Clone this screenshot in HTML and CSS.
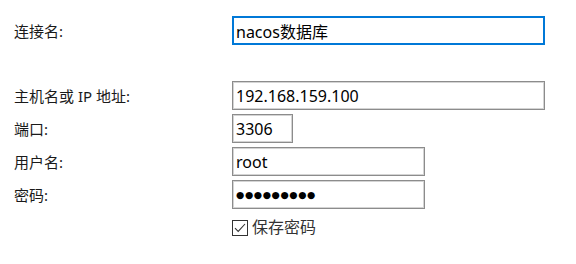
FILE: index.html
```html
<!doctype html>
<html>
<head>
  <meta charset="utf-8">
  <title>连接</title>
  <link rel="stylesheet" href="styles.css">
</head>
<body>

  <form class="conn">
    <label class="name first">连接名:</label>
    <div class="field first"><input type="text" class="wide focus" value="nacos数据库"></div>

    <label class="name">主机名或 IP 地址:</label>
    <div class="field"><input type="text" class="wide" value="192.168.159.100"></div>

    <label class="name">端口:</label>
    <div class="field"><input type="text" class="port" value="3306"></div>

    <label class="name">用户名:</label>
    <div class="field"><input type="text" class="mid" value="root"></div>

    <label class="name">密码:</label>
    <div class="field"><input type="text" class="mid secret" value="●●●●●●●●●"></div>

    <div></div>
    <label class="save">
      <span class="box">
        <svg width="14" height="14" viewBox="0 0 14 14"><path d="M2 7.2 L5.2 10.4 L12 3" fill="none" stroke="#333" stroke-width="1.1"/></svg>
      </span>
      保存密码
    </label>
  </form>

</body>
</html>
```

FILE: styles.css
```css
body {
  margin: 0;
  background: #ffffff;
  font-family: "Noto Sans", "Noto Sans CJK SC", sans-serif;
  font-size: 15px;
  color: #1a1a1a;
}
.conn {
  display: grid;
  grid-template-columns: 218px auto;
  row-gap: 4px;
  padding: 16px 0 0 14px;
}
.name {
  display: flex;
  align-items: center;
  height: 29px;
}
.first {
  margin-bottom: 32px;
}
.field {
  display: flex;
}
input {
  box-sizing: border-box;
  height: 29px;
  padding: 0 3px;
  border: 1px solid #8c8c8c;
  box-shadow: inset 0 0 0 1px #d4d4d4;
  font-family: "Noto Sans", "Noto Sans CJK SC", sans-serif;
  font-size: 16px;
  color: #000;
  outline: none;
}
.focus {
  border: 2px solid #0078d7;
  box-shadow: none;
  padding: 0 2px;
}
.wide {
  width: 313px;
}
.port {
  width: 61px;
}
.mid {
  width: 193px;
}
.secret {
  font-family: "DejaVu Sans", sans-serif;
  font-size: 9.5px;
  letter-spacing: 0.6px;
}
.save {
  display: flex;
  align-items: center;
  gap: 4px;
  height: 17px;
  margin-top: 6px;
  color: #333;
  font-size: 16px;
  line-height: 17px;
}
.box {
  box-sizing: border-box;
  width: 16px;
  height: 16px;
  border: 1px solid #333;
  display: flex;
  align-items: center;
  justify-content: center;
}
```
